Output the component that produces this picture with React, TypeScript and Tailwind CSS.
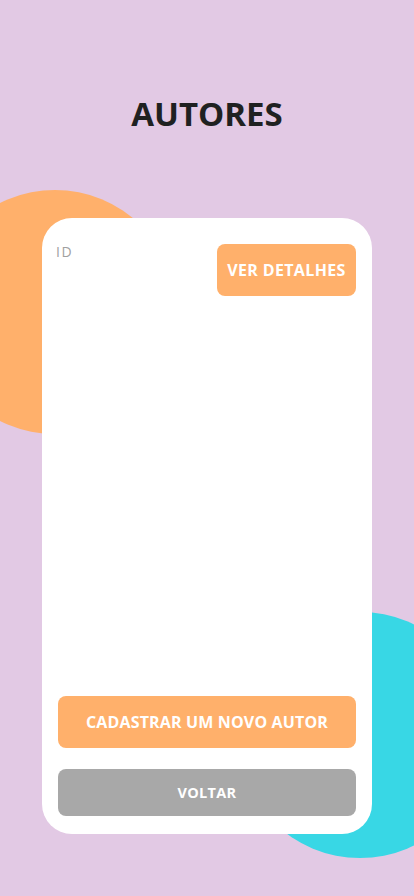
export default function App() {
  return (
    <div
      className="relative min-h-screen w-full overflow-hidden bg-[#e2c9e4]"
      style={{ fontFamily: '"Open Sans", "Liberation Sans", sans-serif' }}
    >
      {/* decorative circles */}
      <div className="absolute left-[-67px] top-[190px] h-[244px] w-[244px] rounded-full bg-[#ffb06b]" />
      <div className="absolute left-[237px] top-[612px] h-[246px] w-[246px] rounded-full bg-[#38d7e5]" />

      <div className="relative flex flex-col items-center">
        <h1 className="mt-[91px] text-[33px] font-bold leading-[46px] text-[#1f2121]">
          AUTORES
        </h1>

        <div className="mt-[81px] flex h-[616px] w-[330px] flex-col rounded-[30px] bg-white px-4 pb-[18px] pt-[26px]">
          <div className="flex items-start justify-between">
            <span className="ml-[-2px] mt-[-3px] text-[14px] tracking-[1.5px] text-[#a0a0a0]">ID</span>
            <button className="flex h-[52px] w-[139px] items-center justify-center rounded-lg bg-[#ffb06b] text-[16px] font-bold tracking-[0.35px] text-white">
              VER DETALHES
            </button>
          </div>

          <div className="flex-1" />

          <button className="flex h-[52px] w-full items-center justify-center rounded-lg bg-[#ffb06b] text-[16px] font-bold tracking-[0.15px] text-white">
            CADASTRAR UM NOVO AUTOR
          </button>
          <button className="mt-[21px] flex h-[47px] w-full items-center justify-center rounded-lg bg-[#a8a8a8] text-[14.5px] font-bold tracking-[0.3px] text-white">
            VOLTAR
          </button>
        </div>
      </div>
    </div>
  );
}
